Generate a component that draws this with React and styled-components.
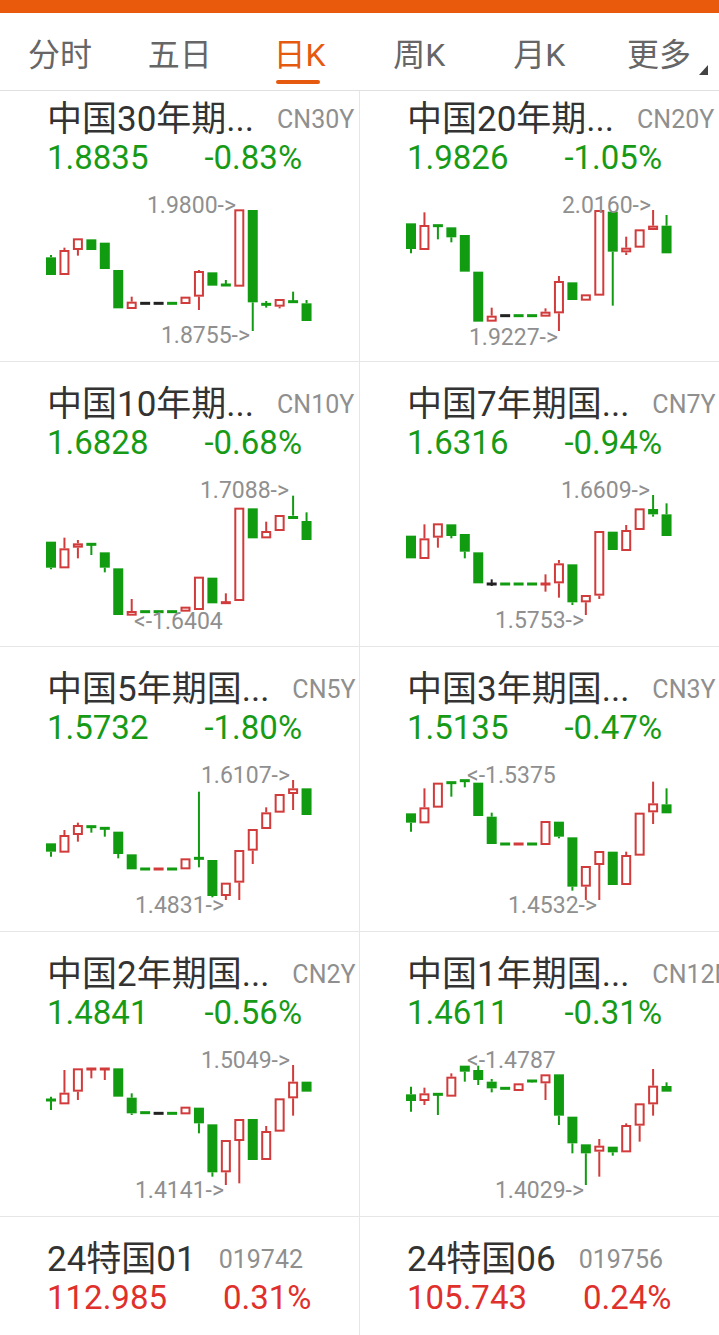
import React from "react";
import styled, { createGlobalStyle } from "styled-components";

const GREEN = "#119b11";
const RED = "#d23b3b";
const TXT_GREEN = "#179b17";
const TXT_RED = "#e0302c";

const GlobalStyle = createGlobalStyle`
  html, body { margin: 0; padding: 0; background: #fff; }
  body {
    font-family: Roboto, "Noto Sans CJK SC", sans-serif;
    -webkit-font-smoothing: antialiased;
  }
`;

const Page = styled.div`
  width: 719px;
  height: 1335px;
  overflow: hidden;
  background: #fff;
`;

const TopBar = styled.div`
  height: 13px;
  background: #e95a0c;
`;

const Tabs = styled.div`
  display: flex;
  height: 77px;
  border-bottom: 1px solid #e0e0e0;
`;

const Tab = styled.div`
  flex: 1;
  position: relative;
  display: flex;
  align-items: center;
  justify-content: center;
  padding-top: 7px;
  font-size: 32px;
  line-height: 40px;
  color: ${(p) => (p.$active ? "#e65a10" : "#666")};
  &::after {
    content: "";
    display: ${(p) => (p.$active ? "block" : "none")};
    position: absolute;
    left: 50%;
    margin-left: -24px;
    top: 67px;
    width: 44px;
    height: 4px;
    border-radius: 2px;
    background: #e65a10;
  }
`;

const Corner = styled.svg`
  position: absolute;
  right: 11px;
  top: 52px;
`;

const Grid = styled.div`
  display: grid;
  grid-template-columns: 360px 359px;
`;

const Cell = styled.div`
  box-sizing: border-box;
  height: ${(p) => (p.$first ? 271 : 285)}px;
  padding-top: ${(p) => (p.$first ? 9 : 23)}px;
  border-bottom: 1px solid #e6e6e6;
  border-right: ${(p) => (p.$left ? "1px solid #e6e6e6" : "none")};
  overflow: hidden;
`;

const TitleRow = styled.div`
  display: flex;
  align-items: center;
  height: 40px;
  padding-left: 47px;
  white-space: nowrap;
`;

const Title = styled.span`
  font-size: 35px;
  line-height: 40px;
  color: #333;
  margin-top: -1px;
`;

const Code = styled.span`
  margin-left: 23px;
  font-size: 25px;
  line-height: 30px;
  color: #8f8f8f;
`;

const PriceRow = styled.div`
  display: flex;
  align-items: center;
  height: 36px;
  padding-left: 47px;
  white-space: nowrap;
  font-size: 33px;
  line-height: 36px;
  color: ${(p) => (p.$up ? TXT_RED : TXT_GREEN)};
`;

const Change = styled.span`
  margin-left: 56px;
`;

const Chart = styled.svg`
  display: block;
  margin-top: 10px;
`;

const CHARTS = [
  {
    off: 9,
    hi: { t: "1.9800->", x: 236, y: 19, a: "end" },
    lo: { t: "1.8755->", x: 250, y: 149, a: "end" },
    c: [
      ["g", 187, 240, 180, 240], ["r", 165, 240, 158], ["r", 130, 165, 130, 182], ["g", 133, 165],
      ["g", 143, 222], ["g", 225, 340], ["r", 320, 342, 305], ["k", 325, 325],
      ["k", 325, 325], ["g", 325, 325], ["r", 305, 327], ["r", 228, 305, 225, 345],
      ["g", 232, 272], ["g", 270, 270, 255], ["r", 43, 275], ["g", 45, 322, 45, 408],
      ["g", 328, 328, 318, 338], ["r", 312, 335, 312, 340], ["g", 320, 320, 290], ["g", 325, 378, 315],
    ],
  },
  {
    off: 9,
    hi: { t: "2.0160->", x: 291, y: 19, a: "end" },
    lo: { t: "1.9227->", x: 198, y: 151, a: "end" },
    c: [
      ["g", 85, 162, 85, 175], ["r", 90, 165, 52], ["g", 92, 92, 92, 133], ["g", 97, 127, 97, 142],
      ["g", 120, 230], ["g", 230, 380], ["r", 362, 380, 338], ["k", 362, 362],
      ["g", 362, 362], ["g", 362, 362], ["r", 350, 365, 340], ["r", 258, 355, 243, 408],
      ["g", 262, 315], ["r", 298, 317], ["r", 45, 302], ["g", 50, 170, 50, 332],
      ["r", 158, 172, 125, 180], ["r", 103, 158], ["r", 92, 105, 45], ["g", 92, 175, 60],
    ],
  },
  {
    off: 4,
    hi: { t: "1.7088->", x: 289, y: 19, a: "end" },
    lo: { t: "<-1.6404", x: 134, y: 150, a: "start" },
    c: [
      ["g", 200, 278, 200, 283], ["r", 220, 280, 188], ["r", 205, 218, 195, 250], ["g", 208, 208, 208, 240],
      ["g", 232, 278, 232, 292], ["g", 280, 420], ["r", 408, 422, 372], ["g", 410, 410],
      ["g", 410, 410], ["g", 410, 410], ["r", 395, 410], ["r", 305, 405],
      ["g", 308, 385], ["r", 383, 383, 355], ["r", 98, 378], ["g", 100, 190],
      ["r", 168, 190, 140], ["r", 120, 168], ["g", 122, 133, 62], ["g", 138, 195, 112],
    ],
  },
  {
    off: 4,
    hi: { t: "1.6609->", x: 290, y: 19, a: "end" },
    lo: { t: "1.5753->", x: 224, y: 149, a: "end" },
    c: [
      ["g", 182, 250], ["r", 190, 252, 148], ["r", 145, 188, 145, 218], ["g", 148, 183, 148, 190],
      ["g", 177, 230, 177, 250], ["g", 232, 325], ["k", 327, 327, 313, 333], ["g", 327, 327],
      ["g", 327, 327], ["g", 327, 327], ["r", 327, 327, 298, 350], ["r", 265, 325, 255, 368],
      ["g", 268, 382, 268, 390], ["r", 360, 382, 360, 420], ["r", 168, 362, 168, 372], ["g", 170, 225],
      ["r", 165, 228, 150], ["r", 100, 165], ["g", 102, 118, 60, 125], ["g", 118, 183, 85],
    ],
  },
  {
    off: 4,
    hi: { t: "1.6107->", x: 290, y: 19, a: "end" },
    lo: { t: "1.4831->", x: 224, y: 149, a: "end" },
    c: [
      ["g", 250, 275, 250, 290], ["r", 225, 278, 210], ["r", 195, 225, 188, 245], ["g", 200, 200, 200, 218],
      ["g", 205, 205, 205, 230], ["g", 215, 282, 215, 295], ["g", 283, 328], ["g", 327, 327],
      ["r", 327, 327], ["g", 327, 327], ["r", 295, 328], ["g", 295, 295, 95, 322],
      ["g", 300, 408, 300, 412], ["r", 368, 408, 368, 420], ["r", 270, 368, 270, 420], ["r", 207, 272, 207, 312],
      ["r", 157, 207, 142], ["r", 102, 158], ["r", 85, 102, 60, 150], ["g", 85, 165],
    ],
  },
  {
    off: 4,
    hi: { t: "<-1.5375", x: 107, y: 19, a: "start" },
    lo: { t: "1.4532->", x: 237, y: 149, a: "end" },
    c: [
      ["g", 160, 188, 160, 215], ["r", 142, 190, 85], ["r", 68, 143], ["g", 68, 68, 68, 110],
      ["g", 62, 62, 62, 82], ["g", 68, 168], ["g", 170, 252, 158], ["g", 252, 252],
      ["r", 252, 252], ["g", 252, 252], ["r", 183, 255], ["g", 185, 230, 185, 235],
      ["g", 232, 380, 232, 392], ["r", 318, 380, 318, 420], ["r", 273, 315, 273, 420], ["g", 275, 375],
      ["r", 285, 375, 275], ["r", 158, 287], ["r", 130, 157, 65, 192], ["g", 133, 160, 85],
    ],
  },
  {
    off: 4,
    hi: { t: "1.5049->", x: 290, y: 19, a: "end" },
    lo: { t: "1.4141->", x: 224, y: 149, a: "end" },
    c: [
      ["g", 165, 165, 155, 195], ["r", 143, 178, 75], ["r", 70, 140, 70, 165], ["r", 72, 72, 72, 100],
      ["r", 72, 72, 72, 105], ["g", 70, 155], ["g", 158, 205, 145, 210], ["g", 203, 203],
      ["k", 205, 205], ["g", 205, 205], ["r", 185, 208], ["g", 188, 235, 188, 265],
      ["g", 238, 382, 238, 395], ["r", 285, 382, 285, 420], ["r", 222, 288, 222, 415], ["g", 222, 345],
      ["r", 258, 345, 243], ["r", 160, 260], ["r", 110, 160, 60, 212], ["g", 110, 140],
    ],
  },
  {
    off: 4,
    hi: { t: "<-1.4787", x: 107, y: 19, a: "start" },
    lo: { t: "1.4029->", x: 224, y: 149, a: "end" },
    c: [
      ["g", 148, 168, 125, 200], ["r", 145, 168, 128, 180], ["g", 148, 148, 145, 210], ["r", 95, 155, 85],
      ["g", 62, 80, 62, 110], ["g", 75, 105, 62, 120], ["g", 110, 130, 102, 142], ["g", 130, 130],
      ["r", 115, 138], ["g", 108, 108, 105, 112], ["r", 88, 115, 88, 165], ["g", 88, 212, 88, 240],
      ["g", 215, 295, 215, 325], ["g", 298, 325, 298, 420], ["r", 302, 320, 282, 395], ["g", 305, 322, 305, 332],
      ["r", 240, 322, 235], ["r", 175, 242, 175, 290], ["r", 122, 178, 72, 212], ["g", 123, 140, 112],
    ],
  },
];

const ITEMS = [
  { title: "中国30年期...", code: "CN30Y", price: "1.8835", chg: "-0.83%" },
  { title: "中国20年期...", code: "CN20Y", price: "1.9826", chg: "-1.05%" },
  { title: "中国10年期...", code: "CN10Y", price: "1.6828", chg: "-0.68%" },
  { title: "中国7年期国...", code: "CN7Y", price: "1.6316", chg: "-0.94%" },
  { title: "中国5年期国...", code: "CN5Y", price: "1.5732", chg: "-1.80%" },
  { title: "中国3年期国...", code: "CN3Y", price: "1.5135", chg: "-0.47%" },
  { title: "中国2年期国...", code: "CN2Y", price: "1.4841", chg: "-0.56%" },
  { title: "中国1年期国...", code: "CN12M", price: "1.4611", chg: "-0.31%" },
  { title: "24特国01", code: "019742", price: "112.985", chg: "0.31%", up: true },
  { title: "24特国06", code: "019756", price: "105.743", chg: "0.24%", up: true },
];

function Candle({ i, c, off }) {
  const [t, bt, bb, wt = bt, wb = bb] = c;
  const cx = 51 + 13.45 * i;
  const y = (v) => v / 3 + off;
  const color = t === "g" ? GREEN : t === "r" ? RED : "#222";
  const h = (bb - bt) / 3;
  let body;
  if (h < 4) {
    body = <rect x={cx - 5} y={y((bt + bb) / 2) - 1.5} width={10} height={3} fill={color} />;
  } else if (t === "r") {
    body = <rect x={cx - 4} y={y(bt) + 1} width={8} height={h - 2} fill="#fff" stroke={color} strokeWidth={2} />;
  } else {
    body = <rect x={cx - 5} y={y(bt)} width={10} height={h} fill={color} />;
  }
  return (
    <g>
      {wt < bt && <line x1={cx} x2={cx} y1={y(wt)} y2={y(bt)} stroke={color} strokeWidth={2} />}
      {wb > bb && <line x1={cx} x2={cx} y1={y(bb)} y2={y(wb)} stroke={color} strokeWidth={2} />}
      {body}
    </g>
  );
}

function Label({ l }) {
  return (
    <text
      x={l.x}
      y={l.y}
      textAnchor={l.a}
      dominantBaseline="central"
      fontSize="23"
      fill="#8f8f8f"
      fontFamily="Roboto, sans-serif"
    >
      {l.t}
    </text>
  );
}

function KChart({ data }) {
  return (
    <Chart width="359" height="170" viewBox="0 0 359 170">
      {data.c.map((c, i) => (
        <Candle key={i} i={i} c={c} off={data.off} />
      ))}
      <Label l={data.hi} />
      <Label l={data.lo} />
    </Chart>
  );
}

const TABS = ["分时", "五日", "日K", "周K", "月K", "更多"];

export default function App() {
  return (
    <Page>
      <GlobalStyle />
      <TopBar />
      <Tabs>
        {TABS.map((t) => (
          <Tab key={t} $active={t === "日K"}>
            {t}
            {t === "更多" && (
              <Corner width="9" height="10" viewBox="0 0 9 10">
                <polygon points="9,0 9,10 0,10" fill="#444" />
              </Corner>
            )}
          </Tab>
        ))}
      </Tabs>
      <Grid>
        {ITEMS.map((it, idx) => (
          <Cell key={idx} $first={idx < 2} $left={idx % 2 === 0}>
            <TitleRow>
              <Title>{it.title}</Title>
              <Code>{it.code}</Code>
            </TitleRow>
            <PriceRow $up={it.up}>
              <span>{it.price}</span>
              <Change>{it.chg}</Change>
            </PriceRow>
            {CHARTS[idx] && <KChart data={CHARTS[idx]} />}
          </Cell>
        ))}
      </Grid>
    </Page>
  );
}
